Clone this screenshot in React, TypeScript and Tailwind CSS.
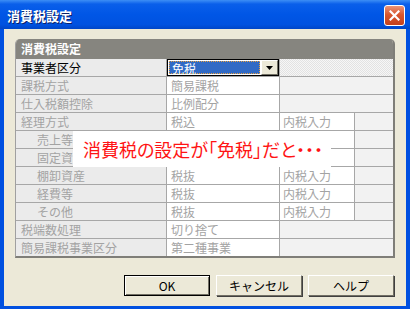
import React from "react";

type Row = {
  label: string;
  indent?: boolean;
  active?: boolean;
  value?: string;
  tax?: string;
};

const rows: Row[] = [
  { label: "事業者区分", active: true },
  { label: "課税方式", value: "簡易課税" },
  { label: "仕入税額控除", value: "比例配分" },
  { label: "経理方式", value: "税込", tax: "内税入力" },
  { label: "売上等", indent: true, value: "", tax: "" },
  { label: "固定資産", indent: true, value: "", tax: "" },
  { label: "棚卸資産", indent: true, value: "税抜", tax: "内税入力" },
  { label: "経費等", indent: true, value: "税抜", tax: "内税入力" },
  { label: "その他", indent: true, value: "税抜", tax: "内税入力" },
  { label: "税端数処理", value: "切り捨て" },
  { label: "簡易課税事業区分", value: "第二種事業" },
];

const font = "font-['Noto_Sans_CJK_JP',sans-serif]";

function Dropdown() {
  return (
    <div className="h-[17px] bg-white border border-black flex items-stretch">
      <div className="flex-1 m-px border border-dotted border-[#e8a040] bg-[#316ac5] text-white pl-[2px] leading-[13px] text-[12px]">
        免税
      </div>
      <div className="w-[17px] bg-[#ece9d8] border-l border-t border-white border-r border-b border-r-[#716f64] border-b-[#716f64] flex items-center justify-center">
        <svg width="7" height="4" viewBox="0 0 7 4">
          <path d="M0 0h7L3.5 4z" fill="#000" />
        </svg>
      </div>
    </div>
  );
}

function Button({ children, focused }: { children: React.ReactNode; focused?: boolean }) {
  return (
    <button
      className={
        "w-[86px] h-[21px] bg-[#ece9d8] text-[12px] text-black flex items-center justify-center " +
        (focused
          ? "border border-black shadow-[inset_1px_1px_0_#fff,inset_-1px_-1px_0_#716f64]"
          : "border border-t-white border-l-white border-r-[#716f64] border-b-[#716f64] shadow-[1px_1px_0_#404040]")
      }
    >
      {children}
    </button>
  );
}

export default function App() {
  return (
    <div className={`w-[410px] h-[309px] flex flex-col bg-[#0050e0] ${font}`}>
      <div className="h-[29px] flex items-start justify-between pl-[7px] pr-[5px] bg-[linear-gradient(to_bottom,#3d8ef5_0%,#0a5fea_14%,#0056e6_50%,#0052e0_85%,#0046c8_100%)]">
        <div className="mt-[6px] text-[13px] font-bold text-white [text-shadow:1px_1px_0_#0a1f6a]">
          消費税設定
        </div>
        <div className="mt-[5px] w-[21px] h-[21px] rounded-[3px] border border-white bg-[linear-gradient(to_bottom,#eb9478,#d9572f_45%,#c4401c)] flex items-center justify-center">
          <svg width="11" height="11" viewBox="0 0 11 11">
            <path d="M1.5 1.5l8 8M9.5 1.5l-8 8" stroke="#fff" strokeWidth="2.2" strokeLinecap="square" />
          </svg>
        </div>
      </div>

      <div className="flex-1 mx-[4px] mb-[3px] bg-[#ece9d8] flex flex-col pt-[10px] pl-[11px] pr-[12px]">
        <div className="relative w-[380px] border-l border-[#a0a0a0] border-r-2 border-b-2 border-r-[#7f7e78] border-b-[#7f7e78] rounded-t-[5px] overflow-hidden">
          <div className="h-[20px] bg-[#86857f] text-white font-bold text-[12px] leading-[20px] pl-[5px]">
            消費税設定
          </div>
          <div className="grid grid-cols-[150px_112px_74px_38px] auto-rows-[17px] gap-px bg-[#a7a7a7] text-[12px] leading-[17px]">
            {rows.map((r) => (
              <React.Fragment key={r.label}>
                <div
                  className={
                    "bg-[#ebebeb] whitespace-nowrap overflow-hidden " +
                    (r.indent ? "pl-[21px] " : "pl-[5px] ") +
                    (r.active ? "text-black" : "text-[#a3a3a3]")
                  }
                >
                  {r.label}
                </div>
                {r.active ? (
                  <>
                    <Dropdown />
                    <div className="col-span-2 bg-[repeating-conic-gradient(#e2e2e2_0_25%,#f6f6f6_0_50%)] bg-[length:2px_2px]" />
                  </>
                ) : r.tax !== undefined ? (
                  <>
                    <div className="bg-white pl-[4px] text-[#a3a3a3]">{r.value}</div>
                    <div className="bg-white pl-[3px] text-[#a3a3a3]">{r.tax}</div>
                    <div className="bg-[#f2f2f2]" />
                  </>
                ) : (
                  <>
                    <div className="bg-white pl-[4px] text-[#a3a3a3]">{r.value}</div>
                    <div className="col-span-2 bg-[#f2f2f2]" />
                  </>
                )}
              </React.Fragment>
            ))}
          </div>

          <div className="absolute left-[57px] top-[92px] w-[258px] h-[36px] bg-white flex items-center pl-[10px] text-[18px] leading-[20px] text-[#ff1414] whitespace-nowrap [font-feature-settings:'palt']">
            消費税の設定が「免税」だと・・・
          </div>
        </div>

        <div className="mt-[17px] flex justify-end gap-[6px]">
          <Button focused>OK</Button>
          <Button>キャンセル</Button>
          <Button>ヘルプ</Button>
        </div>
      </div>
    </div>
  );
}
